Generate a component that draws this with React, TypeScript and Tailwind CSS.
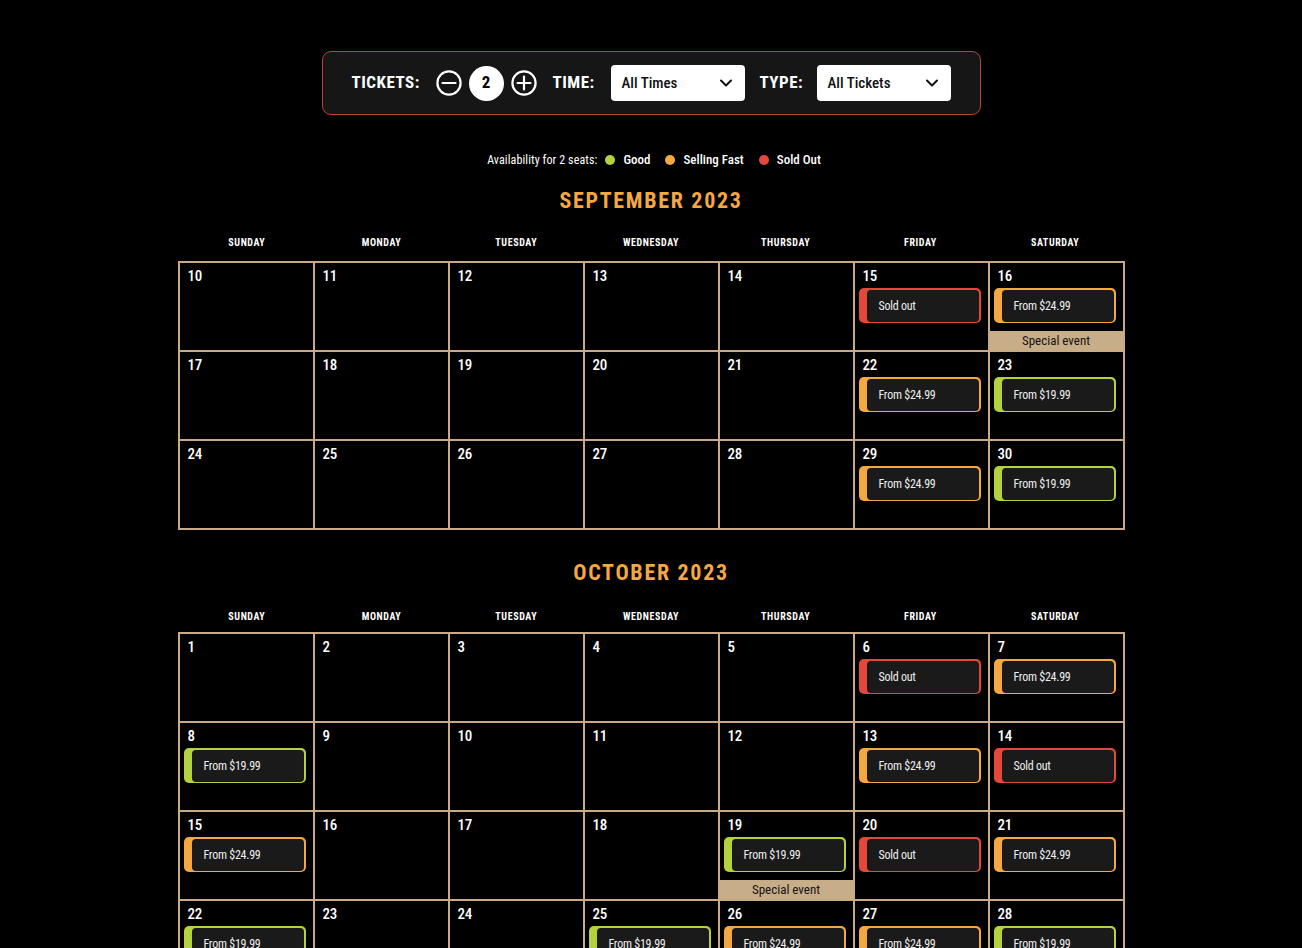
import React from "react";

type Status = "good" | "fast" | "sold";
type Entry = { status: Status; special?: boolean };

const FONT = { fontFamily: '"Roboto Condensed", "Roboto", "Liberation Sans", sans-serif' };

const DAYS = ["Sunday", "Monday", "Tuesday", "Wednesday", "Thursday", "Friday", "Saturday"];

const sept: (number | null)[][] = [
  [10, 11, 12, 13, 14, 15, 16],
  [17, 18, 19, 20, 21, 22, 23],
  [24, 25, 26, 27, 28, 29, 30],
];
const septData: Record<number, Entry> = {
  15: { status: "sold" },
  16: { status: "fast", special: true },
  22: { status: "fast" },
  23: { status: "good" },
  29: { status: "fast" },
  30: { status: "good" },
};

const oct: (number | null)[][] = [
  [1, 2, 3, 4, 5, 6, 7],
  [8, 9, 10, 11, 12, 13, 14],
  [15, 16, 17, 18, 19, 20, 21],
  [22, 23, 24, 25, 26, 27, 28],
  [29, 30, 31, null, null, null, null],
];
const octData: Record<number, Entry> = {
  6: { status: "sold" },
  7: { status: "fast" },
  8: { status: "good" },
  13: { status: "fast" },
  14: { status: "sold" },
  15: { status: "fast" },
  19: { status: "good", special: true },
  20: { status: "sold" },
  21: { status: "fast" },
  22: { status: "good" },
  25: { status: "good" },
  26: { status: "fast" },
  27: { status: "fast" },
  28: { status: "good" },
  29: { status: "good" },
};

function Chip({ status }: { status: Status }) {
  const cls = status === "good" ? "bg-[#b4d23e]" : status === "fast" ? "bg-[#f5a742]" : "bg-[#e5483a]";
  const label = status === "good" ? "From $19.99" : status === "fast" ? "From $24.99" : "Sold out";
  return (
    <div className={`ml-[4px] mt-[3px] h-[35px] w-[122px] rounded-[5px] p-[1.5px] pl-[8px] ${cls}`}>
      <div className="flex h-full items-center rounded-[4px] bg-[#1a1a1a] pl-[12px] text-[12px] tracking-[-0.25px] text-[#eeeeee]">
        {label}
      </div>
    </div>
  );
}

function Month({
  title,
  rows,
  data,
  headMt,
  gridMt,
}: {
  title: string;
  rows: (number | null)[][];
  data: Record<number, Entry>;
  headMt: string;
  gridMt: string;
}) {
  return (
    <div className="flex flex-col items-center">
      <h2 className="h-[28px] text-[22px] font-bold leading-[28px] tracking-[1.7px] text-[#f5a742]">{title}</h2>
      <div className={`grid w-[947px] grid-cols-7 px-[2px] ${headMt}`}>
        {DAYS.map((d) => (
          <div key={d} className="text-center text-[10px] font-bold uppercase leading-[14px] tracking-[0.6px] text-white">
            {d}
          </div>
        ))}
      </div>
      <div className={`grid w-[947px] grid-cols-7 gap-[2px] bg-[#c8aa84] p-[2px] ${gridMt}`}>
        {rows.flat().map((n, i) => {
          const e = n !== null ? data[n] : undefined;
          return (
            <div key={i} className="relative flex h-[87px] flex-col bg-black">
              {n !== null && (
                <div className="pl-[8px] pt-[4px] text-[15px] font-medium leading-[18px] tracking-[-0.3px] text-white">
                  {n}
                </div>
              )}
              {e && <Chip status={e.status} />}
              {e?.special && (
                <div className="mt-auto flex h-[19px] items-center justify-center bg-[#c8ad89] text-[13px] text-[#141414]">
                  Special event
                </div>
              )}
            </div>
          );
        })}
      </div>
    </div>
  );
}

function CircleIcon({ plus }: { plus?: boolean }) {
  return (
    <svg width="26" height="26" viewBox="0 0 26 26" fill="none" stroke="white" strokeWidth="2.2" strokeLinecap="round">
      <circle cx="13" cy="13" r="11.6" />
      <line x1="6.5" y1="13" x2="19.5" y2="13" />
      {plus && <line x1="13" y1="6.5" x2="13" y2="19.5" />}
    </svg>
  );
}

function Chevron() {
  return (
    <svg width="14" height="14" viewBox="0 0 14 14" fill="none" stroke="#111" strokeWidth="2" strokeLinecap="round" strokeLinejoin="round">
      <polyline points="2,4.5 7,9.5 12,4.5" />
    </svg>
  );
}

function Select({ label }: { label: string }) {
  return (
    <div className="flex h-[36px] w-[134px] items-center justify-between rounded-[4px] bg-white pl-[11px] pr-[12px] text-[15px] font-medium text-[#111]">
      <span>{label}</span>
      <Chevron />
    </div>
  );
}

export default function App() {
  return (
    <div className="min-h-screen bg-black pb-[40px] pt-[51px]" style={FONT}>
      <div className="flex flex-col items-center">
        <div className="flex h-[64px] w-[659px] items-center rounded-[9px] border border-[#b9462f] bg-[#161616] pl-[29px]">
          <span className="w-[68px] whitespace-nowrap text-[17px] font-bold tracking-[0.5px] text-white">TICKETS:</span>
          <div className="ml-[16px] flex items-center gap-[7px]">
            <CircleIcon />
            <div className="flex h-[35px] w-[35px] items-center justify-center rounded-full bg-white text-[17px] font-bold text-black">
              2
            </div>
            <CircleIcon plus />
          </div>
          <span className="ml-[16px] w-[43px] whitespace-nowrap text-[17px] font-bold tracking-[0.5px] text-white">TIME:</span>
          <div className="ml-[15px]">
            <Select label="All Times" />
          </div>
          <span className="ml-[15px] w-[42px] whitespace-nowrap text-[17px] font-bold tracking-[0.5px] text-white">TYPE:</span>
          <div className="ml-[15px]">
            <Select label="All Tickets" />
          </div>
        </div>

        <div className="ml-[6px] mt-[37px] flex h-[16px] items-center text-white">
          <span className="text-[12px] tracking-[0.1px]">Availability for 2 seats:</span>
          <span className="ml-[8px] h-[10px] w-[10px] rounded-full bg-[#b4d23e]" />
          <span className="ml-[8px] text-[13px] font-medium">Good</span>
          <span className="ml-[15px] h-[10px] w-[10px] rounded-full bg-[#f5a742]" />
          <span className="ml-[8px] text-[13px] font-medium">Selling Fast</span>
          <span className="ml-[15px] h-[10px] w-[10px] rounded-full bg-[#e5483a]" />
          <span className="ml-[8px] text-[13px] font-medium">Sold Out</span>
        </div>

        <div className="mt-[19px]">
          <Month title="SEPTEMBER 2023" rows={sept} data={septData} headMt="mt-[21px]" gridMt="mt-[11px]" />
        </div>
        <div className="mt-[29px]">
          <Month title="OCTOBER 2023" rows={oct} data={octData} headMt="mt-[23px]" gridMt="mt-[8px]" />
        </div>
      </div>
    </div>
  );
}
